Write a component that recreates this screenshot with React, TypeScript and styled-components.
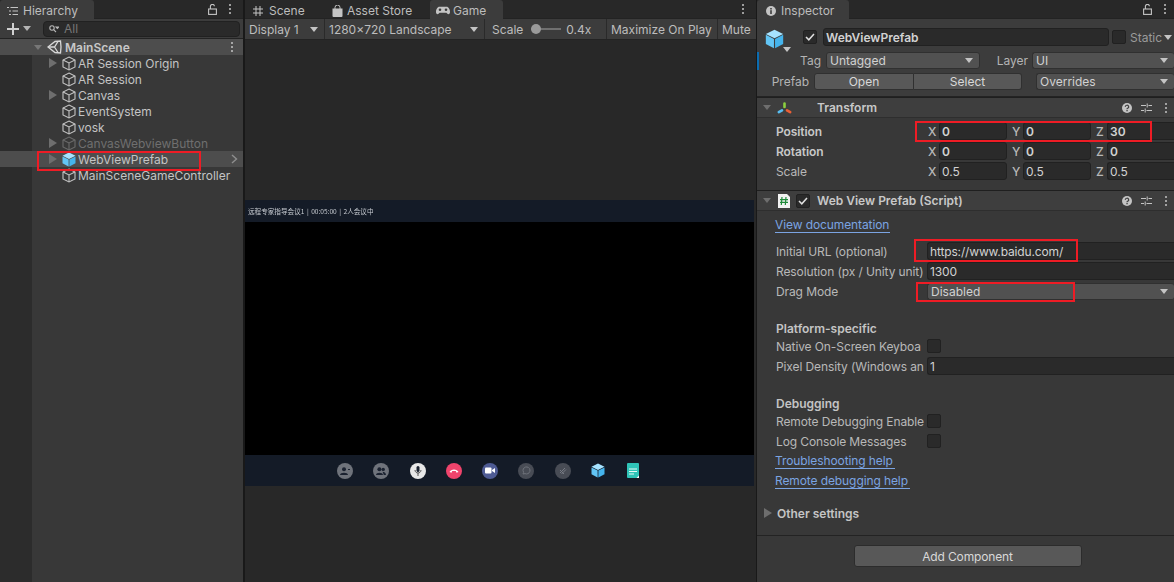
import React from 'react';
import styled, { createGlobalStyle } from 'styled-components';

const GlobalStyle = createGlobalStyle`
    html, body { margin:0; padding:0; background:#282828; }
    body { font-family:Inter, "Liberation Sans", "Noto Sans CJK SC", sans-serif; font-size:12px; color:#c4c4c4; }
    * { box-sizing:border-box; }
`

const Page = styled.div`
    display:grid;
    grid-template-columns:243px 512px 417px;
    column-gap:1px;
    width:1174px;
    height:582px;
    overflow:hidden;
    background:#191919;
`
const Panel = styled.section<{ $inset?: number }>`
    position:relative;
    display:flex;
    flex-direction:column;
    min-width:0;
    height:582px;
    overflow:hidden;
    background:#383838;
    border-left:${({ $inset }) => $inset ?? 0}px solid #191919;
`
const TabBar = styled.div`
    display:flex;
    align-items:stretch;
    flex:none;
    height:19px;
    background:#282828;
    border-bottom:1px solid #232323;
`
const Tab = styled.div<{ $active?: boolean; $width: number; $pad?: number; $gap?: number }>`
    display:flex;
    align-items:center;
    gap:${({ $gap }) => $gap ?? 5}px;
    flex:none;
    width:${({ $width }) => $width}px;
    height:19px;
    padding:2px 0 0 ${({ $pad }) => $pad ?? 8}px;
    background:${({ $active }) => ($active ? '#3c3c3c' : 'transparent')};
    border-radius:3px 3px 0 0;
    color:#bdbdbd;
`
const TabEnd = styled.div<{ $right?: number }>`
    display:flex;
    align-items:center;
    gap:12px;
    margin-left:auto;
    padding-right:${({ $right }) => $right ?? 12}px;
`
const Kebab = styled.span`
    display:block;
    flex:none;
    width:2px;
    height:2px;
    border-radius:1px;
    background:#c4c4c4;
    box-shadow:0 -4px 0 #c4c4c4, 0 4px 0 #c4c4c4;
`
const Tri = styled.span<{ $dir?: 'down' | 'right'; $color?: string }>`
    display:block;
    flex:none;
    width:0;
    height:0;
    ${({ $dir, $color }) =>
        $dir === 'right'
            ? `border-left:8px solid ${$color ?? '#6e6e6e'};border-top:5px solid transparent;border-bottom:5px solid transparent;`
            : `border-top:5px solid ${$color ?? '#c4c4c4'};border-left:4.5px solid transparent;border-right:4.5px solid transparent;`}
`

/* hierarchy */
const HierarchyBar = styled.div`
    display:flex;
    align-items:center;
    flex:none;
    height:20px;
    padding:0 3px 0 7px;
    background:#3c3c3c;
    border-bottom:1px solid #232323;
`
const PlusButton = styled.div`
    display:flex;
    align-items:center;
    gap:4px;
    flex:none;
    width:36px;
`
const SearchBox = styled.div`
    display:flex;
    align-items:center;
    gap:5px;
    flex:1;
    height:16px;
    padding-left:5px;
    background:#2a2a2a;
    border:1px solid #212121;
    border-radius:4px;
    color:#777;
`
const HierarchyBody = styled.div`
    display:flex;
    flex:1;
    background:#383838;
`
const Gutter = styled.div`
    flex:none;
    width:32px;
    background:#2c2c2c;
`
const Tree = styled.div`
    flex:1;
    min-width:0;
`
const SceneRow = styled.div`
    display:flex;
    align-items:center;
    height:16px;
    margin-left:-32px;
    padding-left:34px;
    background:#4d4d4d;
    font-weight:600;
    color:#c8c8c8;
`
const TreeRow = styled.div<{ $selected?: boolean; $dim?: boolean }>`
    display:flex;
    align-items:center;
    height:16px;
    margin-left:${({ $selected }) => ($selected ? '-32px' : '0')};
    padding-left:${({ $selected }) => ($selected ? '49px' : '17px')};
    padding-right:4px;
    background:${({ $selected }) => ($selected ? '#4d4d4d' : 'transparent')};
    color:${({ $dim }) => ($dim ? '#6f6f6f' : '#c4c4c4')};
`
const ArrowSlot = styled.span`
    display:flex;
    align-items:center;
    flex:none;
    width:13px;
`
const RowText = styled.span`
    margin-left:2px;
    white-space:nowrap;
`
const RedBox = styled.div<{ $x: number; $y: number; $w: number; $h: number }>`
    position:absolute;
    left:${({ $x }) => $x}px;
    top:${({ $y }) => $y}px;
    width:${({ $w }) => $w}px;
    height:${({ $h }) => $h}px;
    border:2px solid #ee1c25;
    pointer-events:none;
`

/* game view */
const GameBar = styled.div`
    display:flex;
    align-items:stretch;
    flex:none;
    height:21px;
    background:#3c3c3c;
    border-bottom:1px solid #232323;
`
const GameCell = styled.div<{ $width: number; $end?: boolean; $pad?: number }>`
    display:flex;
    align-items:center;
    justify-content:space-between;
    flex:none;
    width:${({ $width }) => $width}px;
    padding:0 6px 0 ${({ $pad }) => $pad ?? 4}px;
    border-right:${({ $end }) => ($end ? '0' : '1px solid #2a2a2a')};
    color:#bdbdbd;
    white-space:nowrap;
`
const ScaleLabel = styled.span`
    flex:none;
    margin-right:7px;
`
const ScaleCell = styled(GameCell)`
    justify-content:flex-start;
`
const Slider = styled.span`
    position:relative;
    display:block;
    flex:none;
    width:30px;
    height:2px;
    margin:0 5px 0 1px;
    background:#707070;
    &::before {
        content:'';
        position:absolute;
        left:0;
        top:-4px;
        width:10px;
        height:10px;
        border-radius:50%;
        background:#9a9a9a;
    }
`
const GameStage = styled.div`
    display:flex;
    flex-direction:column;
    flex:1;
    padding:160px 2px 96px 0;
    background:#282828;
`
const MeetingTop = styled.div`
    display:flex;
    align-items:center;
    flex:none;
    height:22px;
    padding-left:3px;
    background:#141b27;
    color:#c8ccd2;
    font-family:"Noto Sans CJK SC", sans-serif;
    font-size:6.6px;
    word-spacing:1px;
    white-space:nowrap;
    filter:blur(0.35px);
`
const MeetingVideo = styled.div`
    flex:1;
    background:#000;
`
const MeetingBottom = styled.div`
    display:flex;
    align-items:center;
    flex:none;
    height:31px;
    padding-left:92px;
    gap:20.3px;
    background:#141b27;
`
const CallButton = styled.span<{ $bg: string }>`
    display:flex;
    align-items:center;
    justify-content:center;
    flex:none;
    width:16px;
    height:16px;
    border-radius:50%;
    background:${({ $bg }) => $bg};
`
const NoteIcon = styled.svg`
    flex:none;
    margin-left:2px;
`

/* inspector */
const ObjectHeader = styled.div`
    display:flex;
    flex-direction:column;
    flex:none;
    height:78px;
    padding:7px 0 0 8px;
    background:#3c3c3c;
    border-bottom:1px solid #232323;
`
const ObjectRow = styled.div`
    display:flex;
    align-items:center;
    flex:none;
    height:22px;
`
const ObjectFieldRow = styled(ObjectRow)<{ $top: number }>`
    height:17px;
    margin-top:${({ $top }) => $top}px;
    margin-left:-1px;
`
const BigCube = styled.div`
    position:relative;
    flex:none;
    width:38px;
    height:22px;
    padding-top:3px;
`
const BigCubeArrow = styled.span`
    position:absolute;
    left:18px;
    top:21px;
`
const Check = styled.span<{ $left?: number }>`
    display:flex;
    align-items:center;
    justify-content:center;
    flex:none;
    width:14px;
    height:14px;
    margin-left:${({ $left }) => $left ?? 0}px;
    background:#2a2a2a;
    border:1px solid #212121;
    border-radius:2px;
`
const Field = styled.div<{ $width?: number; $bold?: boolean; $end?: boolean; $left?: number }>`
    display:flex;
    align-items:center;
    flex:${({ $width }) => ($width ? 'none' : '1')};
    width:${({ $width }) => ($width ? `${$width}px` : 'auto')};
    min-width:0;
    height:18px;
    margin-left:${({ $left }) => $left ?? 0}px;
    padding-left:2px;
    background:#2a2a2a;
    border:1px solid #212121;
    border-radius:${({ $end }) => ($end ? '3px 0 0 3px' : '3px')};
    border-right-width:${({ $end }) => ($end ? '0' : '1px')};
    font-weight:${({ $bold }) => ($bold ? 600 : 400)};
    color:#d2d2d2;
    white-space:nowrap;
`
const UrlField = styled(Field)`
    letter-spacing:-0.15px;
`
const Select = styled.div<{ $width?: number; $left?: number; $open?: boolean }>`
    display:flex;
    align-items:center;
    justify-content:space-between;
    flex:${({ $width }) => ($width ? 'none' : '1')};
    width:${({ $width }) => ($width ? `${$width}px` : 'auto')};
    height:17px;
    margin-left:${({ $left }) => $left ?? 0}px;
    padding:0 6px 0 3px;
    background:#515151;
    border:1px solid #303030;
    border-right-width:${({ $open }) => ($open ? '0' : '1px')};
    border-radius:3px;
    color:#d2d2d2;
`
const MiniLabel = styled.span<{ $width: number; $left?: number }>`
    flex:none;
    width:${({ $width }) => $width}px;
    margin-left:${({ $left }) => $left ?? 0}px;
    text-align:right;
    color:#b4b4b4;
    white-space:nowrap;
`
const StaticLabel = styled.span`
    margin:0 2px 0 4px;
    color:#9a9a9a;
`
const Button = styled.div<{ $width: number; $left?: number; $first?: boolean; $last?: boolean }>`
    display:flex;
    align-items:center;
    justify-content:center;
    flex:none;
    width:${({ $width }) => $width}px;
    height:17px;
    margin-left:${({ $left }) => $left ?? 0}px;
    background:#585858;
    border:1px solid #303030;
    border-left-width:${({ $last }) => ($last ? '0' : '1px')};
    border-radius:${({ $first, $last }) => ($first ? '3px 0 0 3px' : $last ? '0 3px 3px 0' : '3px')};
    color:#d8d8d8;
`
const ComponentHeader = styled.div`
    display:flex;
    align-items:center;
    flex:none;
    height:21px;
    padding:0 6px;
    background:#3e3e3e;
    border-top:1px solid #1f1f1f;
    border-bottom:1px solid #2e2e2e;
    font-weight:600;
    color:#c8c8c8;
`
const HeaderTitle = styled.span<{ $left: number }>`
    margin-left:${({ $left }) => $left}px;
`
const HeaderIcons = styled.div`
    display:flex;
    align-items:center;
    gap:9px;
    margin-left:auto;
    padding-right:1px;
`
const HeaderKebab = styled(Kebab)`
    margin-left:4px;
`
const ComponentBody = styled.div`
    display:flex;
    flex-direction:column;
    flex:none;
    height:72px;
`
const PropRow = styled.div<{ $top?: number }>`
    display:flex;
    align-items:center;
    flex:none;
    height:20px;
    margin-top:${({ $top }) => $top ?? 0}px;
    padding-left:19px;
`
const PropLabel = styled.span<{ $bold?: boolean }>`
    flex:none;
    width:151px;
    white-space:nowrap;
    letter-spacing:-0.1px;
    font-weight:${({ $bold }) => ($bold ? 600 : 400)};
    color:${({ $bold }) => ($bold ? '#c8c8c8' : '#b8b8b8')};
`
const VectorLabel = styled.span`
    flex:none;
    width:11px;
    color:#b8b8b8;
    font-weight:500;
`
const VectorFirst = styled(VectorLabel)`
    margin-left:1px;
`
const VectorField = styled(Field)`
    margin-right:5px;
    &:last-child { margin-right:0; }
`
const SectionTitle = styled.div<{ $top: number }>`
    flex:none;
    height:16px;
    line-height:16px;
    margin-top:${({ $top }) => $top}px;
    padding-left:19px;
    font-weight:600;
    color:#c4c4c4;
`
const DocLink = styled.a<{ $top?: number; $width: number }>`
    display:block;
    flex:none;
    width:${({ $width }) => $width}px;
    height:15px;
    line-height:14px;
    margin-top:${({ $top }) => $top ?? 0}px;
    margin-left:18px;
    color:#7ba4e2;
    border-bottom:1px solid #7ba4e2;
    white-space:pre;
    letter-spacing:-0.1px;
`
const Foldout = styled.div`
    display:flex;
    align-items:center;
    gap:5px;
    flex:none;
    height:16px;
    margin-top:16px;
    padding-left:7px;
    font-weight:600;
    color:#c4c4c4;
`
const Footer = styled.div`
    display:flex;
    justify-content:center;
    flex:none;
    height:47px;
    margin-top:14px;
    padding:9px 0 0 4px;
    border-top:1px solid #232323;
`
const AddButton = styled(Button)`
    height:22px;
    border-color:#2c2c2c;
    letter-spacing:-0.15px;
`
const SelectionMark = styled.span`
    position:absolute;
    left:0;
    top:52px;
    width:2px;
    height:18px;
    background:#0b6cb0;
`

const CubeIcon = ({ color = '#c4c4c4' }: { color?: string }) => (
    <svg width="14" height="15" viewBox="0 0 14 15" fill="none" stroke={color} strokeWidth="1.1">
        <path d="M7 1 L13 4 V11 L7 14 L1 11 V4 Z" />
        <path d="M1 4 L7 7 L13 4 M7 7 V14" />
    </svg>
)
const BlueCube = ({ size = 14 }: { size?: number }) => (
    <svg width={size} height={size + 1} viewBox="0 0 14 15">
        <path d="M7 .5 L13.5 3.8 L7 7 L.5 3.8 Z" fill="#a6e3ff" />
        <path d="M.5 4.4 L6.6 7.5 V14.5 L.5 11.3 Z" fill="#62c5f5" />
        <path d="M13.5 4.4 L7.4 7.5 V14.5 L13.5 11.3 Z" fill="#45b4ec" />
    </svg>
)
const UnityMark = styled.svg`
    flex:none;
    margin-right:3px;
`
const UnityLogo = () => (
    <UnityMark width="15" height="14" viewBox="0 0 15 14" fill="none" stroke="#d8d8d8" strokeWidth="1.3">
        <path d="M1 7 L8 1.5 L13.5 1 L14 7 L13.5 13 L8 12.5 Z" />
        <path d="M1 7 H7.5 L11 1.5 M7.5 7 L11 12.5" />
    </UnityMark>
)
const LockIcon = () => (
    <svg width="9" height="11" viewBox="0 0 9 11" fill="none" stroke="#c4c4c4" strokeWidth="1.1">
        <rect x="0.6" y="5" width="7.8" height="5.4" />
        <path d="M2.4 5 V2.6 A2 2 0 0 1 6.4 2.2" />
    </svg>
)
const ListIcon = () => (
    <svg width="11" height="10" viewBox="0 0 11 10" fill="none" stroke="#c4c4c4" strokeWidth="1">
        <path d="M0 1.5 H2 M3.5 1.5 H11 M2 5 H4 M5.5 5 H11 M2 8.5 H4 M5.5 8.5 H11" />
    </svg>
)
const InfoIcon = () => (
    <svg width="10" height="10" viewBox="0 0 10 10">
        <circle cx="5" cy="5" r="5" fill="#c4c4c4" />
        <rect x="4.2" y="4.2" width="1.6" height="3.8" fill="#3c3c3c" />
        <rect x="4.2" y="2" width="1.6" height="1.5" fill="#3c3c3c" />
    </svg>
)
const HashIcon = () => (
    <svg width="10" height="10" viewBox="0 0 10 10" fill="none" stroke="#c4c4c4" strokeWidth="1">
        <path d="M3 0 V10 M7 0 V10 M0 3 H10 M0 7 H10" />
    </svg>
)
const BagIcon = () => (
    <svg width="11" height="12" viewBox="0 0 11 12">
        <path d="M0.5 3.5 H10.5 V11 A1 1 0 0 1 9.5 12 H1.5 A1 1 0 0 1 .5 11 Z" fill="#c4c4c4" />
        <path d="M3 5 V2.5 A2.5 2.5 0 0 1 8 2.5 V5" fill="none" stroke="#c4c4c4" strokeWidth="1" />
    </svg>
)
const PadIcon = () => (
    <svg width="14" height="9" viewBox="0 0 14 9">
        <path d="M3.5 .8 H10.5 C12.6 .8 14 3.4 14 6 C14 8.6 11.8 8.8 10.4 6.8 H3.6 C2.2 8.8 0 8.6 0 6 C0 3.4 1.4 .8 3.5 .8 Z" fill="#c4c4c4" />
        <circle cx="4" cy="3.8" r="1.3" fill="#3c3c3c" />
        <circle cx="10" cy="3.8" r="1.3" fill="#3c3c3c" />
    </svg>
)
const PlusIcon = () => (
    <svg width="12" height="12" viewBox="0 0 12 12">
        <path d="M5 0 H7 V5 H12 V7 H7 V12 H5 V7 H0 V5 H5 Z" fill="#d0d0d0" />
    </svg>
)
const SearchIcon = () => (
    <svg width="10" height="8" viewBox="0 0 10 8" fill="none" stroke="#b8b8b8" strokeWidth="1.1">
        <circle cx="3" cy="3" r="2.2" />
        <path d="M4.8 4.8 L7 7 M7 2 L9.6 2 L8.3 3.5 Z" />
    </svg>
)
const HelpIcon = () => (
    <svg width="10" height="10" viewBox="0 0 10 10">
        <circle cx="5" cy="5" r="5" fill="#c4c4c4" />
        <path d="M3.3 3.9 A1.7 1.6 0 1 1 5.6 5.3 Q5 5.6 5 6.3" fill="none" stroke="#3e3e3e" strokeWidth="1.2" />
        <rect x="4.4" y="7" width="1.3" height="1.3" fill="#3e3e3e" />
    </svg>
)
const SlidersIcon = () => (
    <svg width="11" height="10" viewBox="0 0 11 10" fill="none" stroke="#c4c4c4" strokeWidth="1">
        <path d="M0 2.5 H5 M7.5 2.5 H11 M6.2 .5 V4.5 M0 7.5 H3 M5.5 7.5 H11 M4.2 5.5 V9.5" />
    </svg>
)
const TransformMark = styled.svg`
    flex:none;
    margin-left:6px;
`
const TransformIcon = () => (
    <TransformMark width="15" height="12" viewBox="0 0 15 12" fill="none" strokeWidth="2.6" strokeLinecap="round">
        <path d="M7.5 1.5 V5" stroke="#8ccf3f" />
        <path d="M5 8.3 L1.8 10.2" stroke="#58bdf0" />
        <path d="M10 8.3 L13.2 10.2" stroke="#ec5f35" />
    </TransformMark>
)
const ScriptMark = styled.svg`
    flex:none;
    margin-left:7px;
`
const ScriptIcon = () => (
    <ScriptMark width="12" height="14" viewBox="0 0 12 14">
        <path d="M0 0 H9 L12 3 V14 H0 Z" fill="#f2f2f2" />
        <path d="M4 3 L3.3 11 M8 3 L7.3 11 M2 5.6 H10 M2 8.4 H10" stroke="#1f8a3a" strokeWidth="1.2" fill="none" />
    </ScriptMark>
)
const Tick = () => (
    <svg width="10" height="8" viewBox="0 0 10 8" fill="none" stroke="#e0e0e0" strokeWidth="1.5">
        <path d="M1 4 L3.8 6.8 L9 1" />
    </svg>
)
const ChevronMark = styled.svg`
    margin-left:auto;
    margin-right:1px;
`
const Chevron = () => (
    <ChevronMark width="7" height="10" viewBox="0 0 7 10" fill="none" stroke="#8e8e8e" strokeWidth="1.4">
        <path d="M1 1 L5.5 5 L1 9" />
    </ChevronMark>
)

const callIcons: { bg: string; glyph: React.ReactNode }[] = [
    { bg: '#6f737b', glyph: <svg width="10" height="8" viewBox="0 0 10 8"><circle cx="4" cy="2.2" r="2" fill="#1b2230" /><path d="M0 8 C0 5 8 5 8 8 Z M8 2 H10 V3 H8 Z" fill="#1b2230" /></svg> },
    { bg: '#6f737b', glyph: <svg width="10" height="8" viewBox="0 0 10 8"><circle cx="3.4" cy="2.2" r="2" fill="#1b2230" /><circle cx="7.2" cy="2.4" r="1.7" fill="#1b2230" /><path d="M0 8 C0 5 7 5 7 8 Z M6.6 4.8 C8 4.8 10 5.6 10 8 H7.8 Z" fill="#1b2230" /></svg> },
    { bg: '#e8e8e8', glyph: <svg width="8" height="10" viewBox="0 0 8 10"><rect x="2.5" y="0" width="3" height="6" rx="1.5" fill="#1b2230" /><path d="M1 4 C1 8 7 8 7 4 M4 7 V10" stroke="#555" fill="none" /></svg> },
    { bg: '#f0446c', glyph: <svg width="10" height="5" viewBox="0 0 10 5"><path d="M.5 4 C2 .5 8 .5 9.5 4 L7.5 4.8 L6.8 3 H3.2 L2.5 4.8 Z" fill="#fff" /></svg> },
    { bg: '#4e5b94', glyph: <svg width="10" height="7" viewBox="0 0 10 7"><rect x="0" y=".5" width="6.5" height="6" rx="1" fill="#fff" /><path d="M7 3 L10 1 V6 L7 4 Z" fill="#fff" /></svg> },
    { bg: '#484c55', glyph: <svg width="9" height="9" viewBox="0 0 9 9" fill="none" stroke="#6f737b" strokeWidth="1"><path d="M1 4.5 A3.5 3.5 0 1 1 3 7.6 L1 8 L1.6 6.4 Z" /></svg> },
    { bg: '#484c55', glyph: <svg width="8" height="8" viewBox="0 0 8 8" fill="none" stroke="#777b84" strokeWidth="1"><path d="M1 6 L6 1 M2.5 7 L7 2.5 M1 3 L5 7" /></svg> },
]

const treeItems = [
    { name: 'AR Session Origin', arrow: true },
    { name: 'AR Session' },
    { name: 'Canvas', arrow: true },
    { name: 'EventSystem' },
    { name: 'vosk' },
]

const Hierarchy = () => (
    <Panel>
        <TabBar>
            <Tab $active $width={94} $pad={7}><ListIcon /><span>Hierarchy</span></Tab>
            <TabEnd><LockIcon /><Kebab /></TabEnd>
        </TabBar>
        <HierarchyBar>
            <PlusButton><PlusIcon /><Tri $color="#b4b4b4" /></PlusButton>
            <SearchBox><SearchIcon /><span>All</span></SearchBox>
        </HierarchyBar>
        <HierarchyBody>
            <Gutter />
            <Tree>
                <SceneRow>
                    <ArrowSlot><Tri $color="#777" /></ArrowSlot>
                    <UnityLogo />
                    <span>MainScene</span>
                    <TabEnd $right={10}><Kebab /></TabEnd>
                </SceneRow>
                {treeItems.map((item) => (
                    <TreeRow key={item.name}>
                        <ArrowSlot>{item.arrow && <Tri $dir="right" />}</ArrowSlot>
                        <CubeIcon />
                        <RowText>{item.name}</RowText>
                    </TreeRow>
                ))}
                <TreeRow $dim><ArrowSlot><Tri $dir="right" /></ArrowSlot><CubeIcon color="#6a6a6a" /><RowText>CanvasWebviewButton</RowText></TreeRow>
                <TreeRow $selected><ArrowSlot><Tri $dir="right" /></ArrowSlot><BlueCube /><RowText>WebViewPrefab</RowText><Chevron /></TreeRow>
                <TreeRow><ArrowSlot /><CubeIcon /><RowText>MainSceneGameController</RowText></TreeRow>
            </Tree>
        </HierarchyBody>
        <RedBox $x={37} $y={151} $w={164} $h={20} />
    </Panel>
)

const GameView = () => (
    <Panel $inset={1}>
        <TabBar>
            <Tab $width={79} $gap={6}><HashIcon /><span>Scene</span></Tab>
            <Tab $width={106} $gap={4}><BagIcon /><span>Asset Store</span></Tab>
            <Tab $active $width={73} $pad={6} $gap={3}><PadIcon /><span>Game</span></Tab>
            <TabEnd $right={12}><Kebab /></TabEnd>
        </TabBar>
        <GameBar>
            <GameCell $width={80}><span>Display 1</span><Tri /></GameCell>
            <GameCell $width={160}><span>1280x720 Landscape</span><Tri /></GameCell>
            <ScaleCell $width={122} $pad={7}><ScaleLabel>Scale</ScaleLabel><Slider /><span>0.4x</span></ScaleCell>
            <GameCell $width={111}><span>Maximize On Play</span></GameCell>
            <GameCell $width={37} $end><span>Mute</span></GameCell>
        </GameBar>
        <GameStage>
            <MeetingTop>远程专家指导会议1 | 00:05:00 | 2人会议中</MeetingTop>
            <MeetingVideo />
            <MeetingBottom>
                {callIcons.map((icon, i) => (
                    <CallButton key={i} $bg={icon.bg}>{icon.glyph}</CallButton>
                ))}
                <BlueCube size={14} />
                <NoteIcon width="12" height="15" viewBox="0 0 12 15">
                    <path d="M0 1 A1 1 0 0 1 1 0 H11 A1 1 0 0 1 12 1 V14 A1 1 0 0 1 11 15 H1 A1 1 0 0 1 0 14 Z" fill="#2fc4b8" />
                    <path d="M2 6 H10 M2 8.5 H10 M2 11 H7" stroke="#e8fbf8" strokeWidth="1" />
                    <path d="M9.5 15 L12 12.5 V15 Z" fill="#fff" />
                </NoteIcon>
            </MeetingBottom>
        </GameStage>
    </Panel>
)

const Vector = ({ x, y, z, bold }: { x: string; y: string; z: string; bold?: boolean }) => (
    <>
        <VectorFirst>X</VectorFirst><VectorField $width={68} $bold={bold}>{x}</VectorField>
        <VectorLabel>Y</VectorLabel><VectorField $width={68} $bold={bold}>{y}</VectorField>
        <VectorLabel>Z</VectorLabel><VectorField $bold={bold} $end>{z}</VectorField>
    </>
)

const Inspector = () => (
    <Panel>
        <TabBar>
            <Tab $active $width={92} $pad={9}><InfoIcon /><span>Inspector</span></Tab>
            <TabEnd $right={8}><LockIcon /><Kebab /></TabEnd>
        </TabBar>
        <ObjectHeader>
            <ObjectRow>
                <BigCube><BlueCube size={19} /><BigCubeArrow><Tri /></BigCubeArrow></BigCube>
                <Check><Tick /></Check>
                <Field $width={286} $bold $left={6}>WebViewPrefab</Field>
                <Check $left={3} />
                <StaticLabel>Static</StaticLabel>
                <Tri />
            </ObjectRow>
            <ObjectFieldRow $top={4}>
                <MiniLabel $width={57}>Tag</MiniLabel>
                <Select $width={154} $left={5}><span>Untagged</span><Tri /></Select>
                <MiniLabel $width={33} $left={15}>Layer</MiniLabel>
                <Select $left={4} $open><span>UI</span><Tri /></Select>
            </ObjectFieldRow>
            <ObjectFieldRow $top={4}>
                <MiniLabel $width={45}>Prefab</MiniLabel>
                <Button $width={100} $first $left={5}>Open</Button>
                <Button $width={108} $last>Select</Button>
                <Select $left={14} $open><span>Overrides</span><Tri /></Select>
            </ObjectFieldRow>
        </ObjectHeader>
        <ComponentHeader>
            <Tri $color="#6e6e6e" />
            <TransformIcon />
            <HeaderTitle $left={25}>Transform</HeaderTitle>
            <HeaderIcons><HelpIcon /><SlidersIcon /><HeaderKebab /></HeaderIcons>
        </ComponentHeader>
        <ComponentBody>
            <PropRow $top={3}><PropLabel $bold>Position</PropLabel><Vector x="0" y="0" z="30" bold /></PropRow>
            <PropRow><PropLabel $bold>Rotation</PropLabel><Vector x="0" y="0" z="0" bold /></PropRow>
            <PropRow><PropLabel>Scale</PropLabel><Vector x="0.5" y="0.5" z="0.5" /></PropRow>
        </ComponentBody>
        <ComponentHeader>
            <Tri $color="#6e6e6e" />
            <ScriptIcon />
            <Check $left={6}><Tick /></Check>
            <HeaderTitle $left={7}>Web View Prefab (Script)</HeaderTitle>
            <HeaderIcons><HelpIcon /><SlidersIcon /><HeaderKebab /></HeaderIcons>
        </ComponentHeader>
        <DocLink $top={7} $width={115}>View documentation</DocLink>
        <PropRow $top={8}><PropLabel>Initial URL (optional)</PropLabel><UrlField $end>https://www.baidu.com/</UrlField></PropRow>
        <PropRow><PropLabel>Resolution (px / Unity unit)</PropLabel><UrlField $end>1300</UrlField></PropRow>
        <PropRow><PropLabel>Drag Mode</PropLabel><Select $open><span>Disabled</span><Tri /></Select></PropRow>
        <SectionTitle $top={20}>Platform-specific</SectionTitle>
        <PropRow $top={-1}><PropLabel>Native On-Screen Keyboa</PropLabel><Check /></PropRow>
        <PropRow><PropLabel>Pixel Density (Windows an</PropLabel><UrlField $end>1</UrlField></PropRow>
        <SectionTitle $top={20}>Debugging</SectionTitle>
        <PropRow $top={-1}><PropLabel>Remote Debugging Enable</PropLabel><Check /></PropRow>
        <PropRow><PropLabel>Log Console Messages</PropLabel><Check /></PropRow>
        <DocLink $top={3} $width={120}>Troubleshooting help </DocLink>
        <DocLink $top={5} $width={135}>Remote debugging help </DocLink>
        <Foldout><Tri $dir="right" /><span>Other settings</span></Foldout>
        <Footer><AddButton $width={228}>Add Component</AddButton></Footer>
        <SelectionMark />
        <RedBox $x={158} $y={121} $w={237} $h={21} />
        <RedBox $x={157} $y={239} $w={164} $h={23} />
        <RedBox $x={159} $y={282} $w={159} $h={20} />
    </Panel>
)

const App = () => (
    <>
        <GlobalStyle />
        <Page>
            <Hierarchy />
            <GameView />
            <Inspector />
        </Page>
    </>
)

export default App;
